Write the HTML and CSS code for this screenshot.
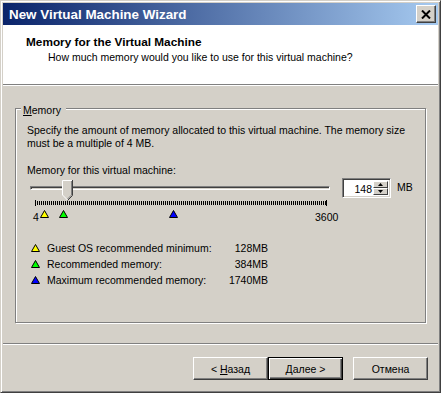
FILE: index.html
```html
<!DOCTYPE html>
<html lang="en">
<head>
    <meta charset="UTF-8">
    <meta name="viewport" content="width=device-width, initial-scale=1.0">
    <title>New Virtual Machine Wizard</title>
    <link rel="stylesheet" href="styles.css">
</head>
<body>
    <div class="window">
        <div class="titlebar">
            <span class="title">New Virtual Machine Wizard</span>
            <button class="close" type="button">
                <svg width="10" height="9" viewBox="0 0 10 9"><path d="M1 0.5 L9 8.5 M9 0.5 L1 8.5" stroke="#000" stroke-width="2" fill="none"/></svg>
            </button>
        </div>

        <div class="header">
            <div class="header-title">Memory for the Virtual Machine</div>
            <div class="header-sub">How much memory would you like to use for this virtual machine?</div>
        </div>

        <div class="content">
            <div class="group">
                <span class="group-label"><u>M</u>emory</span>
                <p class="desc">Specify the amount of memory allocated to this virtual machine. The memory size must be a multiple of 4 MB.</p>
                <div class="field-label">Memory for this virtual machine:</div>

                <div class="slider-row">
                    <div class="slider">
                        <div class="track"></div>
                        <svg class="thumb" width="11" height="21" viewBox="0 0 11 21">
                            <polygon points="0,0 11,0 11,15 5.5,20.5 0,15" fill="#d4d0c8"/>
                            <polyline points="0.5,15 0.5,0.5 10,0.5" stroke="#fff" fill="none"/>
                            <polyline points="0.5,15 5.5,20" stroke="#fff" fill="none"/>
                            <polyline points="10.5,0 10.5,15.5 5.5,20.5" stroke="#404040" fill="none"/>
                            <polyline points="9.5,1 9.5,15 5.5,19" stroke="#808080" fill="none"/>
                        </svg>
                        <div class="ticks"></div>
                        <div class="tick-end tick-first"></div>
                        <div class="tick-end tick-last"></div>
                        <span class="scale scale-min">4</span>
                        <span class="scale scale-max">3600</span>
                        <svg class="marker marker-min" width="9" height="8" viewBox="0 0 9 8"><polygon points="4.5,0.5 8.5,7.5 0.5,7.5" fill="#ffff00" stroke="#000"/></svg>
                        <svg class="marker marker-rec" width="9" height="8" viewBox="0 0 9 8"><polygon points="4.5,0.5 8.5,7.5 0.5,7.5" fill="#00ff00" stroke="#000"/></svg>
                        <svg class="marker marker-max" width="9" height="8" viewBox="0 0 9 8"><polygon points="4.5,0.5 8.5,7.5 0.5,7.5" fill="#0000ff" stroke="#000"/></svg>
                    </div>
                    <div class="spin">
                        <span class="spin-value">148</span>
                        <div class="spin-btns">
                            <span class="spin-btn"><svg width="5" height="3" viewBox="0 0 5 3"><polygon points="2.5,0 5,3 0,3" fill="#000"/></svg></span>
                            <span class="spin-btn"><svg width="5" height="3" viewBox="0 0 5 3"><polygon points="0,0 5,0 2.5,3" fill="#000"/></svg></span>
                        </div>
                    </div>
                    <span class="unit">MB</span>
                </div>

                <ul class="legend">
                    <li>
                        <svg width="9" height="8" viewBox="0 0 9 8"><polygon points="4.5,0.5 8.5,7.5 0.5,7.5" fill="#ffff00" stroke="#000"/></svg>
                        <span>Guest OS recommended minimum:</span>
                        <span class="amount">128MB</span>
                    </li>
                    <li>
                        <svg width="9" height="8" viewBox="0 0 9 8"><polygon points="4.5,0.5 8.5,7.5 0.5,7.5" fill="#00ff00" stroke="#000"/></svg>
                        <span>Recommended memory:</span>
                        <span class="amount">384MB</span>
                    </li>
                    <li>
                        <svg width="9" height="8" viewBox="0 0 9 8"><polygon points="4.5,0.5 8.5,7.5 0.5,7.5" fill="#0000ff" stroke="#000"/></svg>
                        <span>Maximum recommended memory:</span>
                        <span class="amount">1740MB</span>
                    </li>
                </ul>
            </div>
        </div>

        <div class="footer">
            <button class="btn" type="button">&lt; <u>Н</u>азад</button>
            <button class="btn btn-default" type="button"><u>Д</u>алее &gt;</button>
            <button class="btn btn-cancel" type="button">Отмена</button>
        </div>
    </div>
</body>
</html>
```

FILE: styles.css
```css
body {
    margin: 0;
    font-family: "Liberation Sans", Arial, sans-serif;
    font-size: 10.5px;
    color: #000;
    background-color: #d4d0c8;
}
.window {
    width: 441px;
    height: 393px;
    box-sizing: border-box;
    padding: 2px;
    border: 1px solid;
    border-color: #d4d0c8 #404040 #404040 #d4d0c8;
    box-shadow: inset 1px 1px #fff, inset -1px -1px #808080;
    background-color: #d4d0c8;
    display: flex;
    flex-direction: column;
}
.titlebar {
    height: 22px;
    padding: 0 2px 0 6px;
    display: flex;
    align-items: center;
    justify-content: space-between;
    background: linear-gradient(90deg, #0a246a, #a6caf0);
}
.title {
    color: #fff;
    font-weight: bold;
    font-size: 13.4px;
    line-height: 15px;
}
.close {
    width: 20px;
    height: 18px;
    box-sizing: border-box;
    padding: 0;
    background-color: #d4d0c8;
    border: 1px solid;
    border-color: #fff #404040 #404040 #fff;
    box-shadow: inset -1px -1px #808080;
    display: flex;
    align-items: center;
    justify-content: center;
}
.header {
    height: 60px;
    box-sizing: border-box;
    padding: 10px 0 0 23px;
    background-color: #fff;
    border-bottom: 1px solid #808080;
}
.header-title {
    font-weight: bold;
    font-size: 11.8px;
    line-height: 14px;
}
.header-sub {
    margin: 2px 0 0 22px;
    line-height: 13px;
}
.content {
    flex: 1;
    border-top: 1px solid #fff;
    padding: 22px 12px 0;
}
.group {
    position: relative;
    height: 215px;
    box-sizing: border-box;
    padding: 15px 12px 0 11px;
    border: 1px solid #808080;
    box-shadow: inset 1px 1px #fff, 1px 1px #fff;
}
.group-label {
    position: absolute;
    top: -5px;
    left: 5px;
    padding: 0 5px 0 2px;
    line-height: 13px;
    background-color: #d4d0c8;
}
.desc {
    margin: 0;
    line-height: 13px;
}
.field-label {
    margin-top: 14px;
    line-height: 13px;
}
.slider-row {
    margin-top: 1px;
    display: flex;
    align-items: flex-start;
}
.slider {
    position: relative;
    width: 308px;
    height: 44px;
}
.track {
    position: absolute;
    left: 3px;
    top: 8px;
    width: 300px;
    height: 4px;
    box-sizing: border-box;
    border: 1px solid;
    border-color: #808080 #fff #fff #808080;
    box-shadow: inset 1px 1px #404040;
}
.thumb {
    position: absolute;
    left: 35px;
    top: 2px;
}
.ticks {
    position: absolute;
    left: 8px;
    top: 23px;
    width: 292px;
    height: 4px;
    background: repeating-linear-gradient(90deg, #000 0 1px, transparent 1px 2px);
}
.tick-end {
    position: absolute;
    top: 22px;
    width: 1px;
    height: 6px;
    background-color: #000;
}
.tick-first {
    left: 8px;
}
.tick-last {
    left: 299px;
}
.scale {
    position: absolute;
    top: 33px;
    line-height: 13px;
}
.scale-min {
    left: 6px;
}
.scale-max {
    left: 288px;
}
.marker {
    position: absolute;
    top: 32px;
}
.marker-min {
    left: 13px;
}
.marker-rec {
    left: 32px;
}
.marker-max {
    left: 142px;
}
.spin {
    margin-left: 7px;
    width: 49px;
    height: 20px;
    box-sizing: border-box;
    padding: 2px;
    border: 1px solid;
    border-color: #808080 #fff #fff #808080;
    box-shadow: inset 1px 1px #404040, inset -1px -1px #d4d0c8;
    background-color: #fff;
    display: flex;
}
.spin-value {
    flex: 1;
    text-align: right;
    padding-right: 1px;
    line-height: 16px;
}
.spin-btns {
    width: 15px;
    display: flex;
    flex-direction: column;
}
.spin-btn {
    height: 8px;
    box-sizing: border-box;
    background-color: #d4d0c8;
    border: 1px solid;
    border-color: #fff #404040 #404040 #fff;
    display: flex;
    align-items: center;
    justify-content: center;
}
.unit {
    margin-left: 6px;
    line-height: 19px;
}
.legend {
    list-style: none;
    margin: 18px 0 0 4px;
    padding: 0;
    width: 237px;
}
.legend li {
    height: 16px;
    display: grid;
    grid-template-columns: 16px 1fr auto;
    align-items: center;
}
.legend svg {
    display: block;
}
.footer {
    padding: 13px 10px 10px;
    border-top: 1px solid #808080;
    box-shadow: inset 0 1px #fff;
    display: flex;
    justify-content: flex-end;
}
.btn {
    width: 75px;
    height: 23px;
    box-sizing: border-box;
    padding: 0;
    font: inherit;
    color: #000;
    background-color: #d4d0c8;
    border: 1px solid;
    border-color: #fff #404040 #404040 #fff;
    box-shadow: inset -1px -1px #808080;
}
.btn-default {
    border-color: #000;
    box-shadow: inset 1px 1px #fff, inset -1px -1px #404040, inset -2px -2px #808080;
}
.btn-cancel {
    margin-left: 10px;
}
```
